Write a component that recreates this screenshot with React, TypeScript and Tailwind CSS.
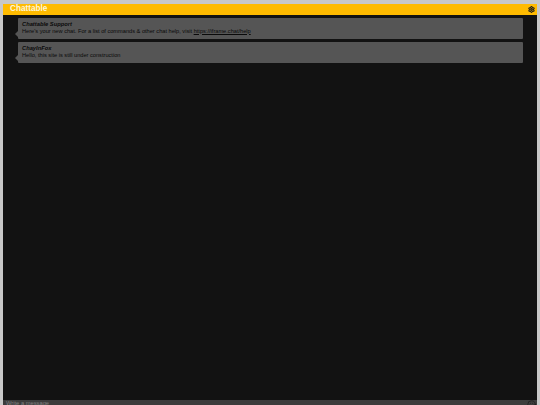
import { Settings, Smile } from 'lucide-react';

const messages = [
  {
    name: 'Chattable Support',
    body: (
      <>
        Here's your new chat. For a list of commands &amp; other chat help, visit{' '}
        <span className="underline">https://iframe.chat/help</span>
      </>
    ),
  },
  { name: 'ChayInFox', body: <>Hello, this site is still under construction</> },
];

export default function App() {
  return (
    <div className="h-[405px] w-[540px] overflow-hidden bg-[#c8c8c8] pt-[4px] px-[3px] font-['Liberation_Sans',sans-serif]">
      <div className="flex h-full flex-col bg-[#121212]">
        <div className="flex h-[11px] shrink-0 items-center justify-between bg-[#ffbb00] pl-[7px] pr-[2px]">
          <span className="text-[8.2px] leading-none font-bold text-[#fff6d8]">Chattable</span>
          <Settings size={7} strokeWidth={3.5} className="text-[#1a1a1a]" />
        </div>
        <div className="flex flex-1 flex-col gap-[3px] pt-[3px] pl-[15px] pr-[14px]">
          {messages.map((m) => (
            <div key={m.name} className="relative h-[21px] rounded-[1px] bg-[#555555] pl-[4px] pt-[3px] text-[5.65px] leading-[6.5px] text-[#0a0a0a]">
              <div className="absolute top-[13px] left-[-3px] h-0 w-0 border-y-[3px] border-r-[3px] border-y-transparent border-r-[#555555]" />
              <div className="text-[5.75px] font-bold italic">{m.name}</div>
              <div>{m.body}</div>
            </div>
          ))}
        </div>
        <div className="flex h-[5px] shrink-0 items-start justify-between bg-[#3c3c3c] pl-[3px] pr-[1px]">
          <span className="text-[5.75px] leading-[7px] text-[#808080]">Write a message</span>
          <Smile size={9} strokeWidth={2} className="text-[#1c1c1c]" />
        </div>
      </div>
    </div>
  );
}
